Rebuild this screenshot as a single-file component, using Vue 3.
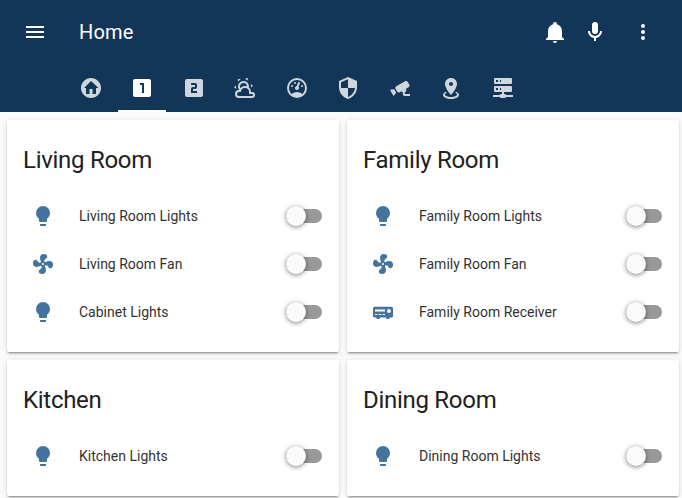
<script setup>
const icons = {
  menu: 'M3,6H21V8H3V6M3,11H21V13H3V11M3,16H21V18H3V16Z',
  bell: 'M21,19V20H3V19L5,17V11C5,7.9 7.03,5.17 10,4.29C10,4.19 10,4.1 10,4A2,2 0 0,1 12,2A2,2 0 0,1 14,4C14,4.1 14,4.19 14,4.29C16.97,5.17 19,7.9 19,11V17L21,19M14,21A2,2 0 0,1 12,23A2,2 0 0,1 10,21',
  mic: 'M12,2A3,3 0 0,1 15,5V11A3,3 0 0,1 12,14A3,3 0 0,1 9,11V5A3,3 0 0,1 12,2M19,11C19,14.53 16.39,17.44 13,17.93V21H11V17.93C7.61,17.44 5,14.53 5,11H7A5,5 0 0,0 12,16A5,5 0 0,0 17,11H19Z',
  dots: 'M12,16A2,2 0 0,1 14,18A2,2 0 0,1 12,20A2,2 0 0,1 10,18A2,2 0 0,1 12,16M12,10A2,2 0 0,1 14,12A2,2 0 0,1 12,14A2,2 0 0,1 10,12A2,2 0 0,1 12,10M12,4A2,2 0 0,1 14,6A2,2 0 0,1 12,8A2,2 0 0,1 10,6A2,2 0 0,1 12,4Z',
  home: 'M19.07,4.93C17.22,3 14.66,1.96 12,2C9.34,1.96 6.79,3 4.94,4.93C3,6.78 1.96,9.34 2,12C1.96,14.66 3,17.21 4.93,19.06C6.78,21 9.34,22.04 12,22C14.66,22.04 17.21,21 19.06,19.06C21,17.21 22.04,14.66 22,12C22.04,9.34 21,6.78 19.07,4.93M17,12V18H13.5V13H10.5V18H7V12H5L12,5L19.5,12H17Z',
  one: 'M14,17H12V9H10V7H14M19,3H5A2,2 0 0,0 3,5V19A2,2 0 0,0 5,21H19A2,2 0 0,0 21,19V5A2,2 0 0,0 19,3Z',
  two: 'M15,11A2,2 0 0,1 13,13H11V15H15V17H9V13A2,2 0 0,1 11,11H13V9H9V7H13A2,2 0 0,1 15,9M19,3H5A2,2 0 0,0 3,5V19A2,2 0 0,0 5,21H19A2,2 0 0,0 21,19V5A2,2 0 0,0 19,3Z',
  weather: 'M12.74,5.47C15.1,6.5 16.35,9.03 15.92,11.46C17.19,12.56 18,14.19 18,16V16.17C18.31,16.06 18.65,16 19,16A3,3 0 0,1 22,19A3,3 0 0,1 19,22H6A4,4 0 0,1 2,18A4,4 0 0,1 6,14H6.27C5,12.45 4.6,10.24 5.5,8.26C6.72,5.5 9.97,4.24 12.74,5.47M11.93,7.3C10.16,6.5 8.09,7.31 7.31,9.07C6.85,10.09 6.93,11.22 7.41,12.13C8.5,10.83 10.16,10 12,10C12.7,10 13.38,10.12 14,10.34C13.94,9.06 13.18,7.86 11.93,7.3M13.55,3.64C13,3.4 12.45,3.23 11.88,3.12L14.37,1.82L15.27,4.71C14.76,4.29 14.19,3.93 13.55,3.64M6.09,4.44C5.6,4.79 5.17,5.19 4.8,5.63L4.91,2.82L7.87,3.5C7.25,3.71 6.65,4.03 6.09,4.44M18,9.71C17.91,9.12 17.78,8.55 17.59,8L19.97,9.5L17.92,11.73C18.03,11.08 18.05,10.4 18,9.71M3.04,11.3C3.11,11.9 3.24,12.47 3.43,13L1.06,11.5L3.1,9.28C3,9.93 2.97,10.61 3.04,11.3M19,18H16V16A4,4 0 0,0 12,12A4,4 0 0,0 8,16H6A2,2 0 0,0 4,18A2,2 0 0,0 6,20H19A1,1 0 0,0 20,19A1,1 0 0,0 19,18Z',
  gauge: 'M12,2A10,10 0 0,0 2,12A10,10 0 0,0 12,22A10,10 0 0,0 22,12A10,10 0 0,0 12,2M12,4A8,8 0 0,1 20,12C20,14.4 19,16.5 17.3,18C15.9,16.7 14,16 12,16C10,16 8.2,16.7 6.7,18C5,16.5 4,14.4 4,12A8,8 0 0,1 12,4M14,5.89C13.62,5.9 13.26,6.15 13.1,6.54L11.81,9.77L11.71,10C11,10.13 10.41,10.6 10.14,11.26C9.73,12.29 10.23,13.45 11.26,13.86C12.29,14.27 13.45,13.77 13.86,12.74C14.12,12.08 14,11.32 13.57,10.76L13.67,10.5L14.96,7.29L14.97,7.26C15.17,6.75 14.92,6.17 14.41,5.96C14.28,5.91 14.15,5.89 14,5.89M10,6A1,1 0 0,0 9,7A1,1 0 0,0 10,8A1,1 0 0,0 11,7A1,1 0 0,0 10,6M7,9A1,1 0 0,0 6,10A1,1 0 0,0 7,11A1,1 0 0,0 8,10A1,1 0 0,0 7,9M17,9A1,1 0 0,0 16,10A1,1 0 0,0 17,11A1,1 0 0,0 18,10A1,1 0 0,0 17,9Z',
  shield: 'M12,12H19C18.47,16.11 15.72,19.78 12,20.92V12H5V6.3L12,3.19M12,1L3,5V11C3,16.55 6.84,21.73 12,23C17.16,21.73 21,16.55 21,11V5L12,1Z',
  cctv: 'M18.15,4.94C17.77,4.91 17.37,5 17,5.2L8.35,10.2C7.39,10.76 7.07,12 7.62,12.94L9.12,15.53C9.67,16.5 10.89,16.82 11.85,16.27L13.65,15.23C13.92,15.69 14.32,16.06 14.81,16.27V18.04C14.81,19.13 15.7,20 16.81,20H22V18.04H16.81V16.27C17.72,15.87 18.31,14.97 18.31,14C18.31,13.54 18.19,13.11 17.97,12.73L20.5,11.27C21.47,10.71 21.8,9.5 21.24,8.53L19.74,5.94C19.4,5.34 18.79,5 18.15,4.94M6.22,13.17L2,13.87L2.75,15.17L4.75,18.63L5.5,19.93L8.22,16.63L6.22,13.17Z',
  marker: 'M12,2C15.31,2 18,4.66 18,7.95C18,12.41 12,19 12,19S6,12.41 6,7.95C6,4.66 8.69,2 12,2M12,6A2,2 0 0,0 10,8A2,2 0 0,0 12,10A2,2 0 0,0 14,8A2,2 0 0,0 12,6M20,19C20,21.21 16.42,23 12,23C7.58,23 4,21.21 4,19C4,17.71 5.22,16.56 7.11,15.83L7.75,16.74C6.67,17.19 6,17.81 6,18.5C6,19.88 8.69,21 12,21C15.31,21 18,19.88 18,18.5C18,17.81 17.33,17.19 16.25,16.74L16.89,15.83C18.78,16.56 20,17.71 20,19Z',
  server: 'M13,18H14A1,1 0 0,1 15,19H22V21H15A1,1 0 0,1 14,22H10A1,1 0 0,1 9,21H2V19H9A1,1 0 0,1 10,18H11V16H4A1,1 0 0,1 3,15V11A1,1 0 0,1 4,10H20A1,1 0 0,1 21,11V15A1,1 0 0,1 20,16H13V18M4,2H20A1,1 0 0,1 21,3V7A1,1 0 0,1 20,8H4A1,1 0 0,1 3,7V3A1,1 0 0,1 4,2M9,6H10V4H9V6M9,14H10V12H9V14M5,4V6H7V4H5M5,12V14H7V12H5Z',
  bulb: 'M12,2A7,7 0 0,0 5,9C5,11.38 6.19,13.47 8,14.74V17A1,1 0 0,0 9,18H15A1,1 0 0,0 16,17V14.74C17.81,13.47 19,11.38 19,9A7,7 0 0,0 12,2M9,21A1,1 0 0,0 10,22H14A1,1 0 0,0 15,21V20H9V21Z',
  fan: 'M12,11A1,1 0 0,0 11,12A1,1 0 0,0 12,13A1,1 0 0,0 13,12A1,1 0 0,0 12,11M12.5,2C17,2 17.11,5.57 14.75,6.75C13.76,7.24 13.32,8.29 13.13,9.22C13.61,9.42 14.03,9.73 14.35,10.13C18.05,8.13 22.03,8.92 22.03,12.5C22.03,17 18.46,17.1 17.28,14.73C16.78,13.74 15.72,13.3 14.79,13.11C14.59,13.59 14.28,14 13.88,14.34C15.87,18.03 15.08,22 11.5,22C7,22 6.91,18.42 9.27,17.24C10.25,16.75 10.69,15.71 10.89,14.79C10.4,14.59 9.97,14.27 9.65,13.87C5.96,15.85 2,15.07 2,11.5C2,7 5.56,6.89 6.74,9.26C7.24,10.25 8.29,10.68 9.22,10.87C9.41,10.39 9.73,9.97 10.14,9.65C8.15,5.96 8.94,2 12.5,2Z',
  receiver: 'M3.5,6.7H20.5A1.5,1.5 0 0,1 22,8.2V16A1.5,1.5 0 0,1 20.5,17.5H18.7V18A1,1 0 0,1 17.7,19H16A1,1 0 0,1 15,18V17.5H9V18A1,1 0 0,1 8,19H6.3A1,1 0 0,1 5.3,18V17.5H3.5A1.5,1.5 0 0,1 2,16V8.2A1.5,1.5 0 0,1 3.5,6.7M4,9.6V11.6H14V9.6H4M18,9A2,2 0 0,0 16,11A2,2 0 0,0 18,13A2,2 0 0,0 20,11A2,2 0 0,0 18,9M4,14V15H6.5V14H4M7.7,14V15H10.2V14H7.7M11.4,14V15H14V14H11.4Z',
}

const tabs = ['home', 'one', 'two', 'weather', 'gauge', 'shield', 'cctv', 'marker', 'server']
const activeTab = 'one'

const rooms = [
  {
    name: 'Living Room',
    devices: [
      { icon: 'bulb', label: 'Living Room Lights' },
      { icon: 'fan', label: 'Living Room Fan' },
      { icon: 'bulb', label: 'Cabinet Lights' },
    ],
  },
  {
    name: 'Family Room',
    devices: [
      { icon: 'bulb', label: 'Family Room Lights' },
      { icon: 'fan', label: 'Family Room Fan' },
      { icon: 'receiver', label: 'Family Room Receiver' },
    ],
  },
  { name: 'Kitchen', devices: [{ icon: 'bulb', label: 'Kitchen Lights' }] },
  { name: 'Dining Room', devices: [{ icon: 'bulb', label: 'Dining Room Lights' }] },
]
</script>

<template>
  <div class="app">
    <header class="header">
      <div class="toolbar">
        <svg class="icon" viewBox="0 0 24 24"><path :d="icons.menu" /></svg>
        <h1 class="title">Home</h1>
        <div class="actions">
          <svg class="icon" viewBox="0 0 24 24"><path :d="icons.bell" /></svg>
          <svg class="icon" viewBox="0 0 24 24"><path :d="icons.mic" /></svg>
          <svg class="icon more" viewBox="0 0 24 24"><path :d="icons.dots" /></svg>
        </div>
      </div>
      <nav class="tabs">
        <div v-for="tab in tabs" :key="tab" class="tab" :class="{ active: tab === activeTab }">
          <svg class="icon" viewBox="0 0 24 24"><path :d="icons[tab]" /></svg>
        </div>
      </nav>
    </header>
    <main class="grid">
      <section v-for="room in rooms" :key="room.name" class="card">
        <h2 class="card-title">{{ room.name }}</h2>
        <div v-for="device in room.devices" :key="device.label" class="row">
          <svg class="icon device" viewBox="0 0 24 24"><path :d="icons[device.icon]" /></svg>
          <span class="label">{{ device.label }}</span>
          <span class="toggle"><span class="knob"></span></span>
        </div>
      </section>
    </main>
  </div>
</template>

<style>
body {
  background: #fafafa;
  overflow: hidden;
}
</style>

<style scoped>
.app {
  font-family: Roboto, "Liberation Sans", sans-serif;
  color: #212121;
  height: 498px;
  overflow: hidden;
}
.icon {
  display: block;
  flex: none;
  width: 24px;
  height: 24px;
  fill: currentColor;
}
.header {
  height: 112px;
  background: #133557;
  color: #fff;
}
.toolbar {
  display: flex;
  align-items: center;
  height: 64px;
  padding: 0 27px 0 23px;
}
.title {
  margin: 0 0 0 32px;
  font-size: 20px;
  font-weight: 400;
  line-height: 24px;
  letter-spacing: 0.15px;
}
.actions {
  display: flex;
  gap: 16px;
  margin-left: auto;
}
.more {
  margin-left: 8px;
}
.tabs {
  display: flex;
  gap: 3.45px;
  height: 48px;
  padding-left: 67px;
}
.tab {
  display: flex;
  align-items: center;
  justify-content: center;
  width: 48px;
  border-bottom: 2px solid transparent;
  padding-top: 2px;
  box-sizing: border-box;
}
.tab .icon {
  opacity: 0.8;
}
.tab.active {
  border-bottom-color: #fff;
}
.tab.active .icon {
  opacity: 1;
}
.grid {
  display: grid;
  grid-template-columns: 332px 332px;
  gap: 8px;
  padding: 8px 7px;
}
.card {
  box-sizing: border-box;
  padding: 24px 17px 16px 16px;
  background: #fff;
  border-radius: 2px;
  box-shadow: 0 2px 2px 0 rgba(0, 0, 0, 0.14), 0 1px 5px 0 rgba(0, 0, 0, 0.12),
    0 3px 1px -2px rgba(0, 0, 0, 0.2);
}
.card-title {
  margin: 0 0 16px;
  font-size: 24px;
  font-weight: 400;
  line-height: 32px;
  letter-spacing: -0.288px;
}
.row {
  display: flex;
  align-items: center;
  height: 48px;
}
.device {
  margin-left: 8px;
  color: #44739e;
}
.label {
  flex: 1;
  margin-left: 24px;
  color: #333;
  font-size: 14px;
  line-height: 20px;
}
.toggle {
  display: flex;
  align-items: center;
  width: 36px;
  height: 14px;
  border-radius: 8px;
  background: #999;
}
.knob {
  flex: none;
  width: 20px;
  height: 20px;
  border-radius: 50%;
  background: #fafafa;
  box-shadow: 0 1px 5px 0 rgba(0, 0, 0, 0.5);
}
</style>
